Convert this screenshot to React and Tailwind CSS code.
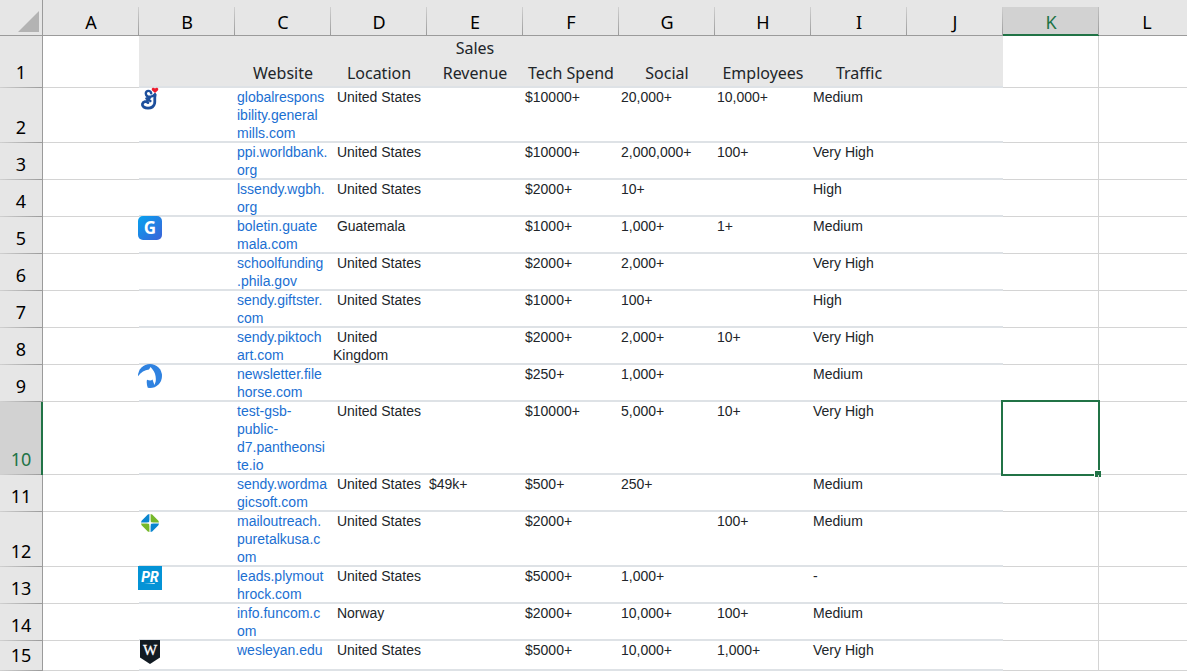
import { Fragment } from 'react';
import clsx from 'clsx';

const COLUMNS = ['A', 'B', 'C', 'D', 'E', 'F', 'G', 'H', 'I', 'J', 'K', 'L'];
const TITLES = ['', 'Website', 'Location', 'Sales Revenue', 'Tech Spend', 'Social', 'Employees', 'Traffic', ''];

// host names are stored already cut to the column width
const ROWS = [
  { n: 2, icon: 'mills', site: ['globalrespons', 'ibility.general', 'mills.com'], location: 'United States', tech: '$10000+', social: '20,000+', staff: '10,000+', traffic: 'Medium' },
  { n: 3, site: ['ppi.worldbank.', 'org'], location: 'United States', tech: '$10000+', social: '2,000,000+', staff: '100+', traffic: 'Very High' },
  { n: 4, site: ['lssendy.wgbh.', 'org'], location: 'United States', tech: '$2000+', social: '10+', traffic: 'High' },
  { n: 5, icon: 'guatemala', site: ['boletin.guate', 'mala.com'], location: 'Guatemala', tech: '$1000+', social: '1,000+', staff: '1+', traffic: 'Medium' },
  { n: 6, site: ['schoolfunding', '.phila.gov'], location: 'United States', tech: '$2000+', social: '2,000+', traffic: 'Very High' },
  { n: 7, site: ['sendy.giftster.', 'com'], location: 'United States', tech: '$1000+', social: '100+', traffic: 'High' },
  { n: 8, site: ['sendy.piktoch', 'art.com'], location: 'United Kingdom', tech: '$2000+', social: '2,000+', staff: '10+', traffic: 'Very High' },
  { n: 9, icon: 'horse', site: ['newsletter.file', 'horse.com'], tech: '$250+', social: '1,000+', traffic: 'Medium' },
  { n: 10, site: ['test-gsb-', 'public-', 'd7.pantheonsi', 'te.io'], location: 'United States', tech: '$10000+', social: '5,000+', staff: '10+', traffic: 'Very High' },
  { n: 11, site: ['sendy.wordma', 'gicsoft.com'], location: 'United States', revenue: '$49k+', tech: '$500+', social: '250+', traffic: 'Medium' },
  { n: 12, icon: 'puretalk', site: ['mailoutreach.', 'puretalkusa.c', 'om'], location: 'United States', tech: '$2000+', staff: '100+', traffic: 'Medium' },
  { n: 13, icon: 'plymouth', site: ['leads.plymout', 'hrock.com'], location: 'United States', tech: '$5000+', social: '1,000+', traffic: '-' },
  { n: 14, site: ['info.funcom.c', 'om'], location: 'Norway', tech: '$2000+', social: '10,000+', staff: '100+', traffic: 'Medium' },
  { n: 15, icon: 'wesleyan', site: ['wesleyan.edu'], location: 'United States', tech: '$5000+', social: '10,000+', staff: '1,000+', traffic: 'Very High' },
];

const SELECTED = { column: 'K', row: 10 };

const GRID_CELL = 'border-b border-[#d4d4d4]';
const DATA_CELL = 'border-b border-[#dee2e6] shadow-[inset_0_-1px_0_#dee2e6] px-0.5 align-top';

const ICONS = {
  mills: (
    <>
      <g fill="none" stroke="#1d4f9c" strokeLinecap="round" strokeLinejoin="round">
        <path strokeWidth="2.4" d="M13.2 6.4C12.8 3 7.6 3 7.8 6.6c.2 2.8 2.6 3.4 5 3 2-.2 3.4-1.2 4.2-2.4M12.6 9.8l-3.6 4.4M8.4 11.4l4 2.6" />
        <path strokeWidth="2.8" d="M17.2 7.8c-1 3.2 0 5.8-.6 8.6-.8 3.2-3.4 4.8-6.6 4.8-3.4 0-6-1.8-5.6-4.2.6-2.6 4-3.2 5.6-1.4" />
      </g>
      <path fill="#ed1c2e" d="M17 6 14.2 3.4C12.6 1.4 15.4-.2 17 1.6c1.6-1.8 4.4-.2 2.8 1.8z" />
    </>
  ),
  guatemala: (
    <>
      <defs>
        <linearGradient id="blue" x1="0" y1="0" x2="1" y2="1">
          <stop offset="0" stopColor="#06a2ef" />
          <stop offset="1" stopColor="#3d62d8" />
        </linearGradient>
      </defs>
      <rect width="24" height="24" rx="5" fill="url(#blue)" />
      <text x="12" y="18" textAnchor="middle" fill="#fff" fontSize="17" fontWeight="700" fontFamily="Open Sans, sans-serif">G</text>
    </>
  ),
  horse: (
    <>
      <circle cx="12" cy="12" r="12" fill="#2f82e0" />
      <path fill="#fff" d="M-1 13.5C2.5 9 6 6 11 5.6L12.6 3l2 2.4c2.6 3 3.8 8 3 12.4L16.4 21l-1.9-5.5c-1.2 1.3-3 1.1-5.5.3-.6 2.6-.2 5.4.8 8.2L9 25H-1z" />
    </>
  ),
  puretalk: (
    <>
      <path fill="#0b86cf" d="M11.4 3v8.4H3l.6-1.6 6.2-6.2z M12.6 21v-8.4H21l-.6 1.6-6.2 6.2z" />
      <path fill="#76b82a" d="M12.6 3v8.4H21l-.6-1.6-6.2-6.2z M11.4 21v-8.4H3l.6 1.6 6.2 6.2z" />
      <path fill="#fff" d="m12 8.6.8 2.6 2.6.8-2.6.8-.8 2.6-.8-2.6-2.6-.8 2.6-.8z" />
    </>
  ),
  plymouth: (
    <>
      <rect width="24" height="24" fill="#0493d6" />
      <text x="12" y="16" textAnchor="middle" fill="#fff" fontSize="14" fontWeight="800" fontStyle="italic" fontFamily="Roboto, sans-serif">PR</text>
      <path fill="#fff" d="m6 17.4 11-.4-.6 1-3-.2z" />
    </>
  ),
  wesleyan: (
    <>
      <path fill="#111a22" d="M2 0h20v17.4L12 24 2 17.4z" />
      <text x="12" y="15" textAnchor="middle" fill="#fff" stroke="#fff" strokeWidth="0.3" fontSize="15" fontFamily="Liberation Serif, serif">W</text>
    </>
  ),
};

function SiteIcon({ name }) {
  return (
    <svg viewBox="0 0 24 24" className="absolute -left-px -top-px size-6" aria-hidden="true">
      {ICONS[name]}
    </svg>
  );
}

function ColumnHeading({ letter }) {
  const selected = letter === SELECTED.column;
  return (
    <th
      scope="col"
      className={clsx(
        'h-9 border-b p-0 pt-2 text-center font-normal',
        selected
          ? 'border-[#217346] bg-[linear-gradient(to_bottom,#c0c0c0,#9b9b9b),linear-gradient(#217346,#217346),linear-gradient(#d2d2d2,#d2d2d2)] bg-[length:1px_28px,100%_1px,100%_28px] bg-[position:right_bottom,left_bottom,left_bottom] bg-no-repeat text-[#217346]'
          : 'border-[#9b9b9b] bg-[linear-gradient(to_bottom,#d0d0d0,#9b9b9b)] bg-[length:1px_28px] bg-[position:right_bottom] bg-no-repeat text-black'
      )}
    >
      {letter}
    </th>
  );
}

function RowHeading({ n }) {
  const selected = n === SELECTED.row;
  return (
    <th
      scope="row"
      className={clsx(
        'border-r bg-[linear-gradient(to_right,#d0d0d0,#9b9b9b)] bg-[length:100%_1px] bg-bottom bg-no-repeat p-0 pb-1 text-center align-bottom text-lg leading-6 font-normal',
        selected
          ? 'border-[#217346] bg-[#d2d2d2] text-[#217346] shadow-[inset_-1px_0_0_#217346]'
          : 'border-[#9b9b9b] bg-[#e6e6e6] text-black'
      )}
    >
      {n}
    </th>
  );
}

function Selection() {
  return (
    <div className="absolute -inset-0.5 border-2 border-[#217346]">
      <div className="absolute -bottom-[3px] -right-[3px] size-[7px] border-l border-t border-white bg-[#217346]" />
    </div>
  );
}

function DataRow({ row }) {
  return (
    <tr className="h-[30px]">
      <RowHeading n={row.n} />
      <td className={GRID_CELL} />
      <td className={clsx(DATA_CELL, 'relative')}>{row.icon && <SiteIcon name={row.icon} />}</td>
      <td className={DATA_CELL}>
        <a href={`https://${row.site.join('')}`} className="text-[#1b6fd2]">
          {row.site.map((part, i) => (
            <Fragment key={part}>
              {i > 0 && <br />}
              {part}
            </Fragment>
          ))}
        </a>
      </td>
      <td className={DATA_CELL}>{row.location && `\u00a0${row.location}`}</td>
      <td className={DATA_CELL}>{row.revenue}</td>
      <td className={DATA_CELL}>{row.tech}</td>
      <td className={DATA_CELL}>{row.social}</td>
      <td className={DATA_CELL}>{row.staff}</td>
      <td className={DATA_CELL}>{row.traffic}</td>
      <td className={DATA_CELL} />
      <td className={clsx(GRID_CELL, 'relative border-r')}>{row.n === SELECTED.row && <Selection />}</td>
      <td className={GRID_CELL} />
    </tr>
  );
}

export default function App() {
  return (
    <div className="h-screen overflow-hidden bg-white">
      <table className="w-full min-w-[1195px] table-fixed border-separate border-spacing-0 font-['Liberation_Sans',Arial,sans-serif] text-sm leading-[18px] text-[#212529] [&_th]:font-['Noto_Sans',sans-serif]">
        <colgroup>
          <col className="w-[43px]" />
          {COLUMNS.map((c) => (
            <col key={c} className={c === 'L' ? undefined : 'w-24'} />
          ))}
        </colgroup>
        <thead className="bg-[#e6e6e6] text-lg leading-6">
          <tr>
            <td className="h-9 border-b border-r border-[#9b9b9b] p-0 pb-[3px] pr-[3px] align-bottom">
              <svg viewBox="0 0 21 21" className="ml-auto block size-[21px]" aria-hidden="true">
                <path d="M21 0v21H0z" fill="#b3b3b3" />
              </svg>
            </td>
            {COLUMNS.map((c) => (
              <ColumnHeading key={c} letter={c} />
            ))}
          </tr>
        </thead>
        <tbody>
          <tr className="h-[52px]">
            <RowHeading n={1} />
            <td className={GRID_CELL} />
            {TITLES.map((title, i) => (
              <th
                key={i}
                scope="col"
                className="border-b border-[#dee2e6] bg-[#e7e7e7] p-0 pb-px text-center align-bottom text-base leading-[25px] font-normal shadow-[inset_0_-1px_0_#dee2e6]"
              >
                {title}
              </th>
            ))}
            <td className={clsx(GRID_CELL, 'border-r')} />
            <td className={GRID_CELL} />
          </tr>
          {ROWS.map((row) => (
            <DataRow key={row.n} row={row} />
          ))}
        </tbody>
      </table>
    </div>
  );
}
